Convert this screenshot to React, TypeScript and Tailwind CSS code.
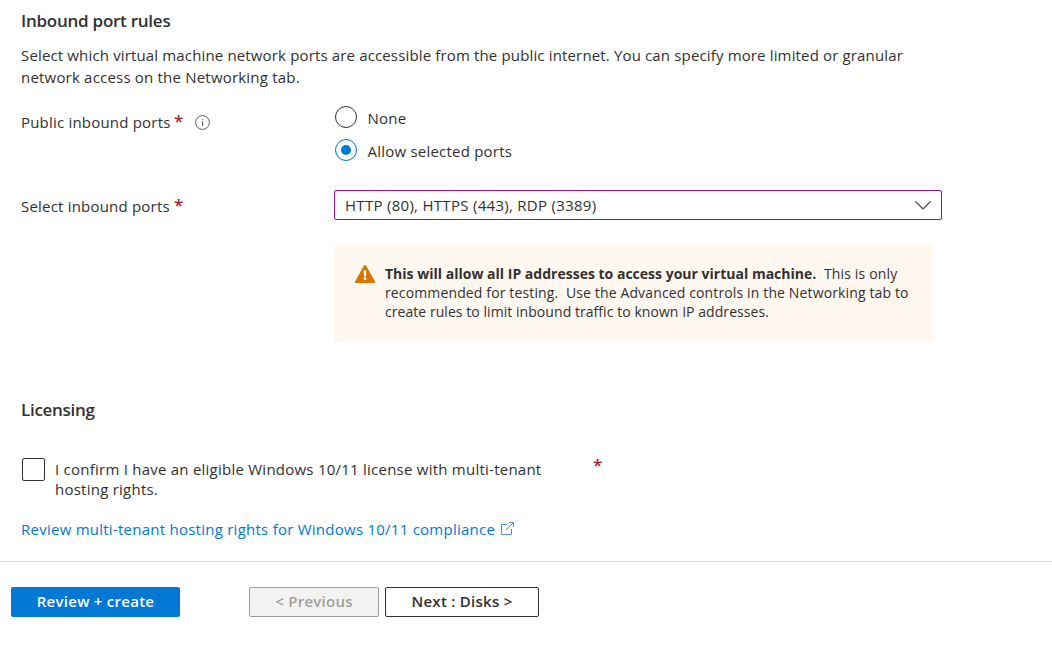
import type { ReactNode } from "react";

function Required() {
  return <span className="relative -top-[2px] ml-[4px] text-[17px] leading-none font-semibold text-[#a4262c]">*</span>;
}

function Radio({ label, checked }: { label: string; checked?: boolean }) {
  return (
    <label className="flex h-[33px] items-start">
      <span
        className={`flex size-[22px] shrink-0 items-center justify-center rounded-full border ${
          checked ? "border-[#0078d4]" : "border-[#323130]"
        }`}
      >
        {checked && <span className="size-[10px] rounded-full bg-[#0078d4]" />}
      </span>
      <span className="ml-[10.5px] pt-px leading-[22px] tracking-[0.22px]">{label}</span>
    </label>
  );
}

function InfoIcon() {
  return (
    <svg className="ml-3 size-[15px]" viewBox="0 0 15 15" fill="none" stroke="#605e5c">
      <circle cx="7.5" cy="7.5" r="6.9" strokeWidth="1" />
      <path d="M7.5 6V11" strokeWidth="1" />
      <path d="M7.5 4V5" strokeWidth="1" />
    </svg>
  );
}

function WarningIcon() {
  return (
    <svg className="h-[18px] w-5 shrink-0" viewBox="0 0 20 18">
      <path
        d="M9 .6a1.15 1.15 0 0 1 2 0l8.8 15.7a1.1 1.1 0 0 1-1 1.7H1.2a1.1 1.1 0 0 1-1-1.7z"
        fill="#db7500"
      />
      <path d="M8.7 5.2h2.6l-.4 6.3H9.1z" fill="#fff" />
      <circle cx="10" cy="13.7" r="1.35" fill="#fff" />
    </svg>
  );
}

function Row({ label, children }: { label: ReactNode; children: ReactNode }) {
  return (
    <div className="flex items-start">
      <div className="flex w-[313px] shrink-0 items-center">{label}</div>
      {children}
    </div>
  );
}

export default function App() {
  return (
    <div className="flex h-[645px] w-[1052px] flex-col overflow-hidden bg-white font-['Open_Sans',sans-serif] text-[15px] whitespace-nowrap text-[#323130]">
      <main className="flex h-[561px] flex-col pl-[21px]">
        <h2 className="mt-[9px] text-[17px] leading-6 font-semibold tracking-[-0.25px]">Inbound port rules</h2>
        <p className="mt-[11px] leading-[22px]">
          <span className="block tracking-[0.15px]">
            Select which virtual machine network ports are accessible from the public internet. You can specify more
            limited or granular
          </span>
          <span className="block tracking-[0.2px]">network access on the Networking tab.</span>
        </p>

        <div className="mt-[18px] h-[84px]">
          <Row
            label={
              <div className="mt-[5px] flex h-[22px] items-center">
                <span className="w-[149px] tracking-[0.2px]">Public inbound ports</span>
                <Required />
                <InfoIcon />
              </div>
            }
          >
            <div className="pl-px">
              <Radio label="None" />
              <Radio label="Allow selected ports" checked />
            </div>
          </Row>
        </div>

        <Row
          label={
            <div className="mt-[5px] flex h-[22px] items-center">
              <span className="w-[149px] tracking-[0.2px]">Select inbound ports</span>
              <Required />
            </div>
          }
        >
          <div className="flex h-[30px] w-[608px] items-center justify-between rounded-[2px] border border-[#881798] px-[10px]">
            <span className="tracking-[0.29px]">HTTP (80), HTTPS (443), RDP (3389)</span>
            <svg className="h-[9px] w-4" viewBox="0 0 16 9" fill="none" stroke="#484644" strokeWidth="1.2">
              <path d="M.5.5 8 8l7.5-7.5" />
            </svg>
          </div>
        </Row>

        <div className="mt-[24px] ml-[313px] flex h-[98px] w-[599px] items-start rounded-[2px] bg-[#fff8f0] pt-[21px] pl-[21px]">
          <WarningIcon />
          <p className="ml-[10px] pt-[0.3px] text-[14px] leading-[18.7px]">
            <span className="block">
              <strong className="font-bold tracking-[0.01px]">
                This will allow all IP addresses to access your virtual machine.
              </strong>
              <span className="tracking-[0.16px]">&nbsp; This is only</span>
            </span>
            <span className="block tracking-[0.135px]">
              recommended for testing.&nbsp; Use the Advanced controls in the Networking tab to
            </span>
            <span className="block tracking-[0.055px]">
              create rules to limit inbound traffic to known IP addresses.
            </span>
          </p>
        </div>

        <h2 className="mt-14 text-[17px] leading-6 font-semibold tracking-[-0.3px]">Licensing</h2>

        <div className="mt-9 flex items-start">
          <span className="ml-px size-[23px] shrink-0 rounded-[2px] border border-[#323130]" />
          <p className="ml-[10px] w-[534px] pt-px leading-5 tracking-[0.24px]">
            <span className="block">I confirm I have an eligible Windows 10/11 license with multi-tenant</span>
            <span className="block">hosting rights.</span>
          </p>
          <Required />
        </div>

        <a className="mt-[19px] flex h-[22px] items-center text-[#0078d4]">
          <span className="tracking-[0.25px]">Review multi-tenant hosting rights for Windows 10/11 compliance</span>
          <svg className="mb-[2px] ml-[6px] size-[13px]" viewBox="0 0 13 13" fill="none" stroke="#4a8fe8">
            <path d="M6 2.5H.5v10h10V7M5 8 12.3.7M8 .5h4.5V5" />
          </svg>
        </a>
      </main>

      <footer className="flex h-[84px] items-start border-t border-[#dcdcdc] pt-[25px] pl-[11px] text-[15px] font-semibold tracking-[0.27px]">
        <button className="h-[30px] w-[169px] rounded-[2px] bg-[#0078d4] pb-[2px] text-white">Review + create</button>
        <button className="ml-[69px] h-[30px] w-[130px] rounded-[2px] border border-[#a19f9d] bg-[#f3f2f1] pb-[2px] text-[#a19f9d]">
          &lt; Previous
        </button>
        <button className="ml-[6px] h-[30px] w-[154px] rounded-[2px] border border-[#323130] bg-white pb-[2px]">
          Next : Disks &gt;
        </button>
      </footer>
    </div>
  );
}
